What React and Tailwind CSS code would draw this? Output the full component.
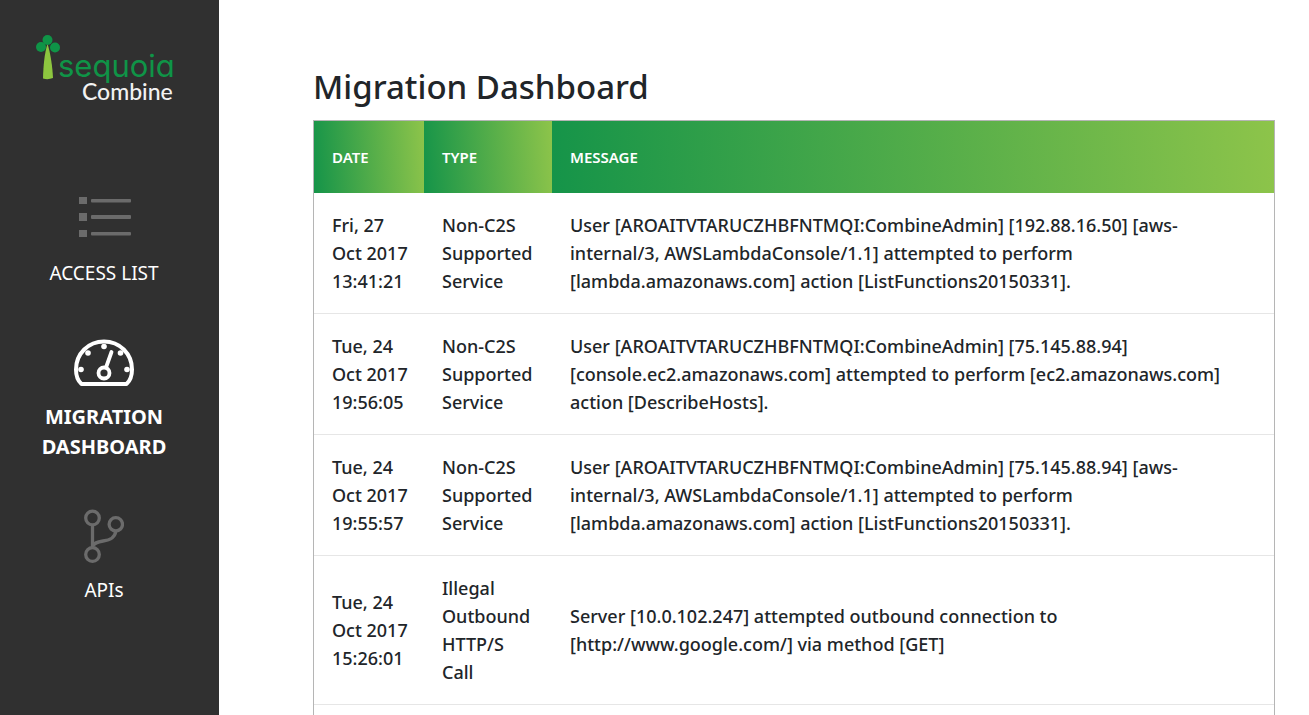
const rows = [
  {
    date: 'Fri, 27 Oct 2017 13:41:21',
    type: 'Non-C2S Supported Service',
    message:
      'User [AROAITVTARUCZHBFNTMQI:CombineAdmin] [192.88.16.50] [aws-internal/3, AWSLambdaConsole/1.1] attempted to perform [lambda.amazonaws.com] action [ListFunctions20150331].',
  },
  {
    date: 'Tue, 24 Oct 2017 19:56:05',
    type: 'Non-C2S Supported Service',
    message:
      'User [AROAITVTARUCZHBFNTMQI:CombineAdmin] [75.145.88.94] [console.ec2.amazonaws.com] attempted to perform [ec2.amazonaws.com] action [DescribeHosts].',
  },
  {
    date: 'Tue, 24 Oct 2017 19:55:57',
    type: 'Non-C2S Supported Service',
    message:
      'User [AROAITVTARUCZHBFNTMQI:CombineAdmin] [75.145.88.94] [aws-internal/3, AWSLambdaConsole/1.1] attempted to perform [lambda.amazonaws.com] action [ListFunctions20150331].',
  },
  {
    date: 'Tue, 24 Oct 2017 15:26:01',
    type: 'Illegal Outbound HTTP/S Call',
    message:
      'Server [10.0.102.247] attempted outbound connection to [http://www.google.com/] via method [GET]',
  },
];

function Logo() {
  return (
    <svg width="142" height="72" viewBox="0 0 142 72" role="img" aria-label="Sequoia Combine">
      <path d="M11.500 9C14.500 18 16.500 32 17 43Q12 45 7 43.500C7.300 31 8.500 18 11.500 9Z" fill="#8dc63f" />
      <g fill="#0f9447">
        <circle cx="11.500" cy="5" r="5" />
        <circle cx="5" cy="12" r="5" />
        <circle cx="19" cy="12.500" r="5" />
      </g>
      <text x="22" y="42" fontSize="31" fill="#0f9447" className="font-['Inter',sans-serif] font-normal [font-feature-settings:'cv11']">sequoia</text>
      <text x="46" y="65" fontSize="23" fill="#f2f2f2" className="font-['Lato',sans-serif] font-medium">Combine</text>
    </svg>
  );
}

function ListIcon() {
  return (
    <svg width="54" height="42" viewBox="0 0 54 42" fill="#6b6b6b" aria-hidden="true">
      <rect x="2" y="1" width="8" height="7" />
      <rect x="2" y="17" width="8" height="8" />
      <rect x="2" y="34" width="8" height="7" />
      <rect x="14" y="3" width="40" height="3.500" rx="1" />
      <rect x="14" y="19" width="40" height="4" rx="1" />
      <rect x="14" y="36" width="40" height="3.500" rx="1" />
    </svg>
  );
}

function GaugeIcon() {
  return (
    <svg width="62" height="48" viewBox="0 0 62 48" fill="none" stroke="#fff" aria-hidden="true">
      <path
        d="M8.500 45C4.500 41.500 3 36 3 30.500C3 14.500 15.500 2.500 31 2.500S59 14.500 59 30.500C59 36 57.500 41.500 53.500 45Z"
        strokeWidth="4"
        strokeLinejoin="round"
      />
      <circle cx="31" cy="34" r="5.500" strokeWidth="3.800" />
      <path d="M33 28.500L38.500 13" strokeWidth="3.800" strokeLinecap="round" />
      <g fill="#fff" stroke="none">
        <circle cx="8" cy="30.500" r="2.800" />
        <circle cx="15" cy="14" r="2.800" />
        <circle cx="31" cy="7.500" r="2.800" />
        <circle cx="47.500" cy="14" r="2.800" />
        <circle cx="54" cy="30.500" r="2.800" />
      </g>
    </svg>
  );
}

function BranchIcon() {
  return (
    <svg width="40" height="54" viewBox="0 0 40 54" fill="none" stroke="#6b6b6b" strokeWidth="3.300" aria-hidden="true">
      <circle cx="8.500" cy="9" r="6.800" />
      <circle cx="31.800" cy="15.300" r="6.700" />
      <circle cx="8.500" cy="45.500" r="6.800" />
      <path d="M8.500 16V38.500M8.500 37.500C10 34 13 33 19 32C26 31 31 29 31.800 22" />
    </svg>
  );
}

export default function App() {
  return (
    <div className="flex h-screen overflow-hidden bg-white font-['Noto_Sans','Open_Sans',sans-serif] text-[#212529]">
      <aside className="flex w-[219px] shrink-0 flex-col bg-[#303030] text-[19px] leading-[30px] text-white">
        <a href="#home" className="ml-9 mt-[35px]">
          <Logo />
        </a>
        <nav className="mr-[11px] mt-[89px] flex flex-col items-center text-center">
          <a href="#access" className="flex flex-col items-center gap-5">
            <ListIcon />
            ACCESS LIST
          </a>
          <a href="#migration" aria-current="page" className="mt-[51px] flex w-[150px] flex-col items-center gap-[15px] text-[20px] font-bold">
            <GaugeIcon />
            MIGRATION DASHBOARD
          </a>
          <a href="#apis" className="mt-[47px] flex flex-col items-center gap-3">
            <BranchIcon />
            APIs
          </a>
        </nav>
      </aside>
      <main className="flex min-w-0 flex-1 flex-col pl-[94px] pr-[34px] pt-16">
        <h1 className="mb-2.5 text-[33px] font-medium leading-[46px]">Migration Dashboard</h1>
        <div className="flex-1 border border-b-0 border-[#b5b5b5]">
          <table className="w-full table-fixed border-separate border-spacing-0 text-left">
            <colgroup>
              <col className="w-[110px]" />
              <col className="w-[128px]" />
              <col />
            </colgroup>
            <thead>
              <tr className="text-[15px] leading-[36px] text-white">
                {['DATE', 'TYPE', 'MESSAGE'].map((name) => (
                  <th
                    key={name}
                    scope="col"
                    className="bg-[linear-gradient(86deg,#159449,#8dc44a)] p-[18px] font-semibold"
                  >
                    {name}
                  </th>
                ))}
              </tr>
            </thead>
            <tbody className="text-[18px] font-medium leading-7">
              {rows.map((row) => (
                <tr key={row.date}>
                  <td className="border-b border-[#e6e6e6] py-[18px] pl-[18px] pr-3">{row.date}</td>
                  <td className="border-b border-[#e6e6e6] p-[18px]">{row.type}</td>
                  <td className="border-b border-[#e6e6e6] p-[18px]">{row.message}</td>
                </tr>
              ))}
            </tbody>
          </table>
        </div>
      </main>
    </div>
  );
}
